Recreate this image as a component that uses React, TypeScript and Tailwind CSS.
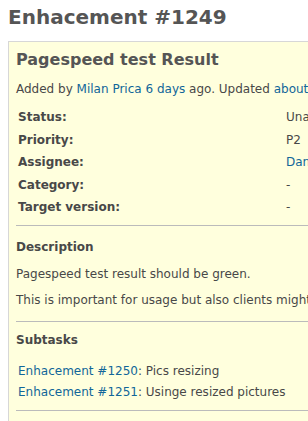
import React from 'react';

const attributes = [
  { label: 'Status:', value: 'Unassigned', link: false },
  { label: 'Priority:', value: 'P2', link: false },
  { label: 'Assignee:', value: 'Dan Ilic', link: true },
  { label: 'Category:', value: '-', link: false },
  { label: 'Target version:', value: '-', link: false },
];

const subtasks = [
  { id: 'Enhacement #1250', title: 'Pics resizing' },
  { id: 'Enhacement #1251', title: 'Usinge resized pictures' },
];

const App = () => {
  return (
    <div className="w-[308px] h-[421px] overflow-hidden bg-white font-['DejaVu_Sans',sans-serif] text-[12px] text-[#484848]">
      <div className="pl-2 pt-[4px]">
        <h2 className="text-[20px] leading-[26px] font-bold text-[#555] mb-[11px] whitespace-nowrap">
          Enhacement #1249
        </h2>

        <div className="w-[600px] border border-[#d7d7d7] bg-[#ffffdd] pl-[7px] pr-2 pt-[6px]">
          <h3 className="text-[16px] leading-[24px] font-bold text-[#555] whitespace-nowrap">
            Pagespeed test Result
          </h3>
          <p className="mt-[9px] leading-[16px] whitespace-nowrap">
            Added by <a className="text-[#169]">Milan Prica</a>{' '}
            <a className="text-[#169]">6 days</a> ago. Updated{' '}
            <a className="text-[#169]">about 4 hours</a> ago.
          </p>

          <div className="mt-[9px] flex flex-col pl-[2px]">
            {attributes.map((a) => (
              <div key={a.label} className="flex h-[22.5px] items-center">
                <span className="w-[268px] font-bold">{a.label}</span>
                <span className={a.link ? 'text-[#169]' : ''}>{a.value}</span>
              </div>
            ))}
          </div>

          <hr className="mt-[6px] border-t border-[#bbb]" />

          <p className="mt-[13px] font-bold leading-[16px]">Description</p>
          <p className="mt-[11px] leading-[16px] whitespace-nowrap">
            Pagespeed test result should be green.
          </p>
          <p className="mt-[10px] leading-[16px] whitespace-nowrap">
            This is important for usage but also clients might check it.
          </p>

          <hr className="mt-[13px] border-t border-[#bbb]" />

          <p className="mt-[10px] font-bold leading-[16px]">Subtasks</p>
          <div className="mt-[15px] pl-[2px] flex flex-col gap-[5px]">
            {subtasks.map((s) => (
              <p key={s.id} className="leading-[16px] whitespace-nowrap">
                <a className="text-[#169]">{s.id}</a>: {s.title}
              </p>
            ))}
          </div>

          <hr className="mt-[10px] border-t border-[#bbb]" />
          <div className="h-8" />
        </div>
      </div>
    </div>
  );
};

export default App;
